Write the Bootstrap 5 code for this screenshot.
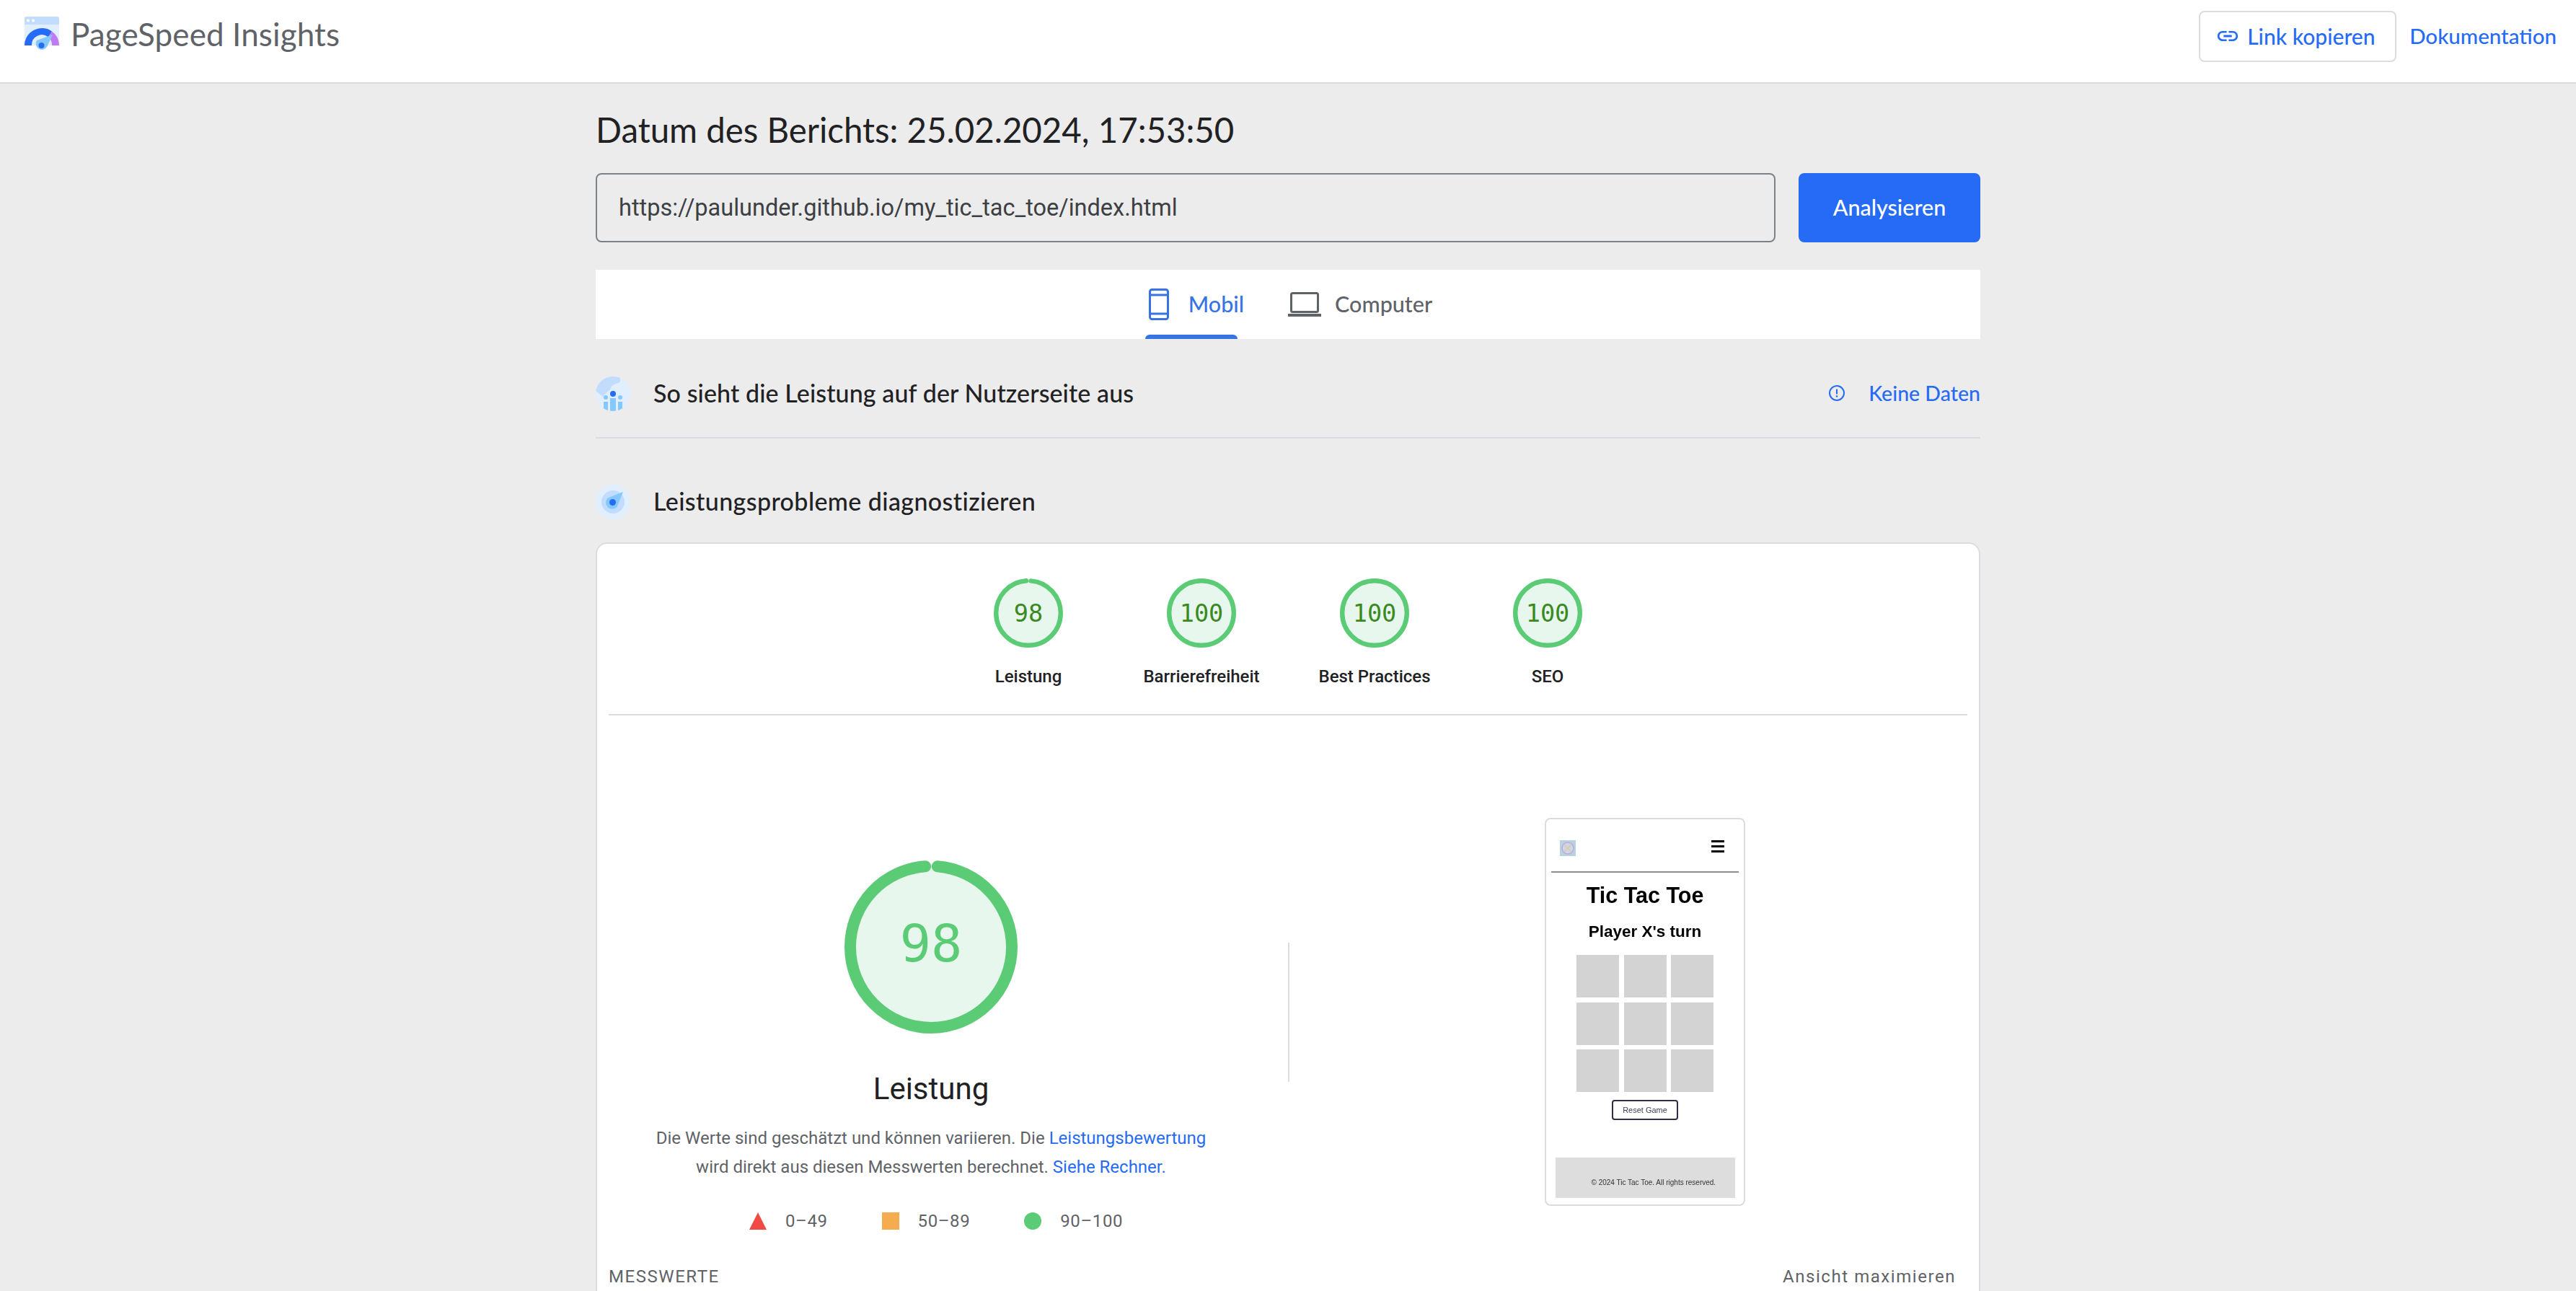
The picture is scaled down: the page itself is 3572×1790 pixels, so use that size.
<!DOCTYPE html>
<html lang="de">
<head>
    <meta charset="UTF-8">
    <meta name="viewport" content="width=device-width, initial-scale=1.0">
    <title>PageSpeed Insights</title>
    <link href="https://cdn.jsdelivr.net/npm/bootstrap@5.3.0/dist/css/bootstrap.min.css" rel="stylesheet">
    <style>
        html, body { height: 100%; overflow: hidden; }
        body { background: #ececec; font-family: Roboto, "Liberation Sans", sans-serif; color: #212124; }
        a { text-decoration: none; }
        .gsans { font-family: Lato, "Open Sans", sans-serif; }

        .psi-top { height: 116px; background: #fff; border-bottom: 2px solid #dadce0; padding: 0 27px 0 34px; }
        .psi-logo { width: 48px; height: 48px; margin-top: -20px; }
        .psi-brand { font-size: 44px; line-height: 48px; letter-spacing: .1px; color: #5f6368; margin: -20px 0 0 16px; }
        .psi-copy { width: 274px; height: 71px; margin-top: -14px; border: 2px solid #dadce0; border-radius: 8px; color: #266bf6; font-size: 30px; font-weight: 500; gap: 10px; background: #fff; padding: 0 0 0 21px; }
        .psi-copy:hover { color: #266bf6; border-color: #dadce0; }
        .psi-docs { color: #266bf6; font-size: 29.500px; font-weight: 500; margin: -14px 0 0 18px; }

        .psi-main { width: 1920px; }
        .psi-date { font-size: 47.400px; line-height: 64px; font-weight: 400; margin: 32px 0 28px; color: #212124; }
        .psi-url { height: 96px; flex: 1; border: 2px solid #7f8285; border-radius: 8px; background: #ececec; font-size: 32.500px; padding: 0 30px; color: #3c4043; box-shadow: none; }
        .psi-url:focus { background: #ececec; border-color: #7f8285; box-shadow: none; }
        .psi-go { width: 252px; height: 96px; background: #266bf6; border: 0; border-radius: 8px; color: #fff; font-size: 30.500px; font-weight: 500; }
        .psi-tabs { height: 96px; margin-top: 38px; padding-left: 7px; background: #fff; gap: 61px; }
        .psi-tab { position: relative; height: 100%; gap: 27px; font-size: 30.500px; font-weight: 500; color: #5f6368; }
        .psi-tab-computer { gap: 19px; }
        .psi-tab.is-on { color: #3574e2; }
        .psi-tab.is-on::after { content: ""; position: absolute; left: -5px; bottom: 0; width: 128px; height: 6px; background: #3574e2; border-radius: 6px 6px 0 0; }
        .psi-sec { padding: 52px 0 36px; border-bottom: 2px solid #dadce0; }
        .psi-sec-b { padding: 64px 0 32px; }
        .psi-sec-ico { width: 48px; height: 48px; margin-right: 32px; flex: none; }
        .psi-sec-title { font-size: 34px; line-height: 48px; letter-spacing: .1px; font-weight: 500; color: #212124; margin: -2px 0 0; }
        .psi-sec-b .psi-sec-title { letter-spacing: .4px; }
        .psi-none { color: #266bf6; font-size: 28.500px; font-weight: 500; gap: 32px; margin-top: -2px; }

        .psi-panel { height: 1200px; background: #fff; border: 2px solid #dadce0; border-bottom: 0; border-radius: 16px 16px 0 0; padding: 48px 16px 0; box-sizing: border-box; }
        .psi-gauges { border-bottom: 2px solid #dcdcdc; padding-bottom: 36px; }
        .psi-g { width: 240px; }
        .psi-g svg { width: 96px; height: 96px; display: block; }
        .psi-g-label { font-size: 24px; line-height: 32px; font-weight: 500; color: #212124; margin-top: 24px; }
        .psi-num { font-family: "DejaVu Sans Mono", monospace; }
        .psi-left { width: 894px; padding-top: 201px; }
        .psi-big { width: 240px; height: 240px; display: block; }
        .psi-big-label { font-size: 42px; line-height: 56px; margin-top: 49px; color: #212124; }
        .psi-desc { font-size: 24px; line-height: 40px; color: #5f6368; margin: 20px 0 0; text-align: center; }
        .psi-desc a { color: #266bf6; }
        .psi-legend { gap: 75px; margin-top: 43px; padding-left: 14px; font-size: 24px; line-height: 24px; letter-spacing: .6px; color: #5f6368; }
        .psi-legend > div { gap: 26px; }
        .psi-sq { width: 24px; height: 24px; background: #f4ac4f; }
        .psi-dot { width: 24px; height: 24px; background: #5ccb75; border-radius: 50%; }
        .psi-divider { width: 2px; height: 193px; background: #dcdcdc; margin: 315px 0 0 48px; flex: none; }
        .psi-right { flex: 1; padding: 142px 0 0 46px; }
        .psi-metrics { margin-top: 49px; font-size: 24px; line-height: 32px; color: #5f6368; letter-spacing: 1.550px; padding-right: 16px; }

        .shot { width: 278px; height: 538px; border: 2px solid #dcdcdc; border-radius: 8px; font-family: "Liberation Sans", Arial, sans-serif; color: #000; background: #fff; filter: blur(.35px); }
        .shot-nav { margin: 0 7px; height: 74px; padding: 29px 20px 21px 12px; border-bottom: 2px solid #8e8e8e; }
        .shot-logo { width: 22px; height: 22px; }
        .shot-burger { width: 18px; height: 17px; }
        .shot-h1 { font-size: 30.500px; line-height: 38px; font-weight: 700; margin: 12px 0 0; }
        .shot-h2 { font-size: 22.500px; line-height: 30px; font-weight: 700; margin: 17px 0 0; }
        .shot-grid { display: grid; grid-template-columns: repeat(3, 59px); grid-auto-rows: 59px; gap: 6.500px; margin-top: 17px; }
        .shot-grid div { background: #d3d3d3; }
        .shot-btn { width: 92px; height: 28px; margin-top: 11px; border: 2px solid #2a2f45; border-radius: 4px; font-size: 11px; line-height: 24px; text-align: center; color: #3d4156; }
        .shot-foot { width: 249px; height: 56px; margin-top: 52px; background: #dddddd; font-size: 10px; line-height: 14px; padding: 28px 0 0 50px; white-space: nowrap; color: #333; }
    </style>
</head>
<body>

<nav class="psi-top d-flex align-items-center justify-content-between">
    <a href="#" class="d-flex align-items-center">
        <svg class="psi-logo" viewBox="0 0 48 48">
            <path d="M0 40V10h48v30z" fill="#e0eefe"/>
            <path d="M3 0h42a3 3 0 0 1 3 3v8H0V3a3 3 0 0 1 3-3z" fill="#c2dcfd"/>
            <circle cx="5" cy="5.500" r="2" fill="#fff"/><circle cx="12" cy="5.500" r="2" fill="#fff"/>
            <path d="M0 40a24 24 0 0 1 38-19.500l-5 8A14 14 0 0 0 10 40z" fill="#266bf6"/>
            <path d="M38 20.500A24 24 0 0 1 48 40H38a14 14 0 0 0-5-11.500z" fill="#c07af5"/>
            <path d="M17 33 39 25 31 42a8 8 0 1 1-14-9z" fill="#85c8fd"/>
            <circle cx="23.500" cy="40" r="4" fill="#266bf6"/>
        </svg>
        <span class="psi-brand gsans">PageSpeed Insights</span>
    </a>
    <div class="d-flex align-items-center">
        <button type="button" class="btn psi-copy gsans d-flex align-items-center justify-content-start">
            <svg width="34" height="34" viewBox="0 0 24 24" fill="#266bf6"><path d="M3.900 12c0-1.710 1.390-3.100 3.100-3.100h4V7H7c-2.760 0-5 2.240-5 5s2.240 5 5 5h4v-1.900H7c-1.710 0-3.100-1.390-3.100-3.100zM8 13h8v-2H8v2zm9-6h-4v1.900h4c1.710 0 3.100 1.390 3.100 3.100s-1.390 3.100-3.100 3.100h-4V17h4c2.760 0 5-2.240 5-5s-2.240-5-5-5z"/></svg>
            Link kopieren
        </button>
        <a href="#" class="psi-docs gsans">Dokumentation</a>
    </div>
</nav>

<main class="psi-main mx-auto">
    <h1 class="psi-date gsans">Datum des Berichts: 25.02.2024, 17:53:50</h1>
    <form class="d-flex gap-4 psi-form" onsubmit="return false">
        <input type="text" class="form-control psi-url" value="https://paulunder.github.io/my_tic_tac_toe/index.html">
        <button type="submit" class="btn psi-go gsans ms-2">Analysieren</button>
    </form>

    <div class="psi-tabs d-flex justify-content-center">
        <div class="psi-tab is-on gsans d-flex align-items-center">
            <svg width="28" height="44" viewBox="0 0 28 44"><rect x="1.500" y="1.500" width="25" height="41" rx="3" fill="none" stroke="#3574e2" stroke-width="3"/><path d="M2 9h24M2 35h24" stroke="#3574e2" stroke-width="3"/></svg>
            <span>Mobil</span>
        </div>
        <div class="psi-tab psi-tab-computer gsans d-flex align-items-center">
            <svg width="46" height="34" viewBox="0 0 46 34"><rect x="4.500" y="1.500" width="37" height="26" rx="2" fill="none" stroke="#5f6368" stroke-width="3"/><rect x="0" y="30" width="46" height="4" fill="#5f6368"/></svg>
            <span>Computer</span>
        </div>
    </div>

    <div class="psi-sec d-flex align-items-center">
        <svg class="psi-sec-ico" viewBox="0 0 48 48">
            <defs><clipPath id="crux"><circle cx="24" cy="24" r="24"/></clipPath></defs>
            <circle cx="24" cy="24" r="24" fill="#e0eefe"/>
            <path d="M0 0h34v6c0 4-6 3-10 6-3 2-3 6-6 8-3 2-6 5-8 8L0 20z" fill="#c2dcfd" clip-path="url(#crux)"/>
            <g clip-path="url(#crux)" fill="#85c8fd">
                <circle cx="14" cy="29" r="3"/><circle cx="34" cy="29" r="3"/>
                <rect x="11" y="35" width="6" height="13"/><rect x="20" y="30" width="8" height="18"/><rect x="31" y="35" width="6" height="13"/>
            </g>
            <circle cx="24" cy="24" r="4" fill="#266bf6"/>
        </svg>
        <h2 class="psi-sec-title gsans flex-grow-1">So sieht die Leistung auf der Nutzerseite aus</h2>
        <div class="psi-none gsans d-flex align-items-center">
            <svg width="24" height="24" viewBox="0 0 24 24"><circle cx="12" cy="12" r="10" fill="none" stroke="#266bf6" stroke-width="2"/><path d="M12 6.500v7" stroke="#266bf6" stroke-width="2"/><circle cx="12" cy="16.500" r="1.300" fill="#266bf6"/></svg>
            <span>Keine Daten</span>
        </div>
    </div>

    <div class="psi-sec-b d-flex align-items-center">
        <svg class="psi-sec-ico" viewBox="0 0 48 48">
            <circle cx="24" cy="24" r="24" fill="#e0eefe"/>
            <circle cx="24" cy="24" r="16" fill="#c2dcfd"/>
            <path d="M16.500 18.500 38 10 29.500 31a8 8 0 1 1-13-12.500z" fill="#85c8fd"/>
            <circle cx="23.500" cy="24.500" r="4.500" fill="#266bf6"/>
        </svg>
        <h2 class="psi-sec-title gsans">Leistungsprobleme diagnostizieren</h2>
    </div>

    <section class="psi-panel">
        <div class="psi-gauges d-flex justify-content-center">
            <div class="psi-g d-flex flex-column align-items-center">
                <svg viewBox="0 0 120 120">
                    <circle cx="60" cy="60" r="56" fill="#e7f7ee"/>
                    <circle cx="60" cy="60" r="56" fill="none" stroke="#5ccb75" stroke-width="8" stroke-linecap="round" stroke-dasharray="343 9" stroke-dashoffset="-4.500" transform="rotate(-90 60 60)"/>
                    <text x="60" y="75" text-anchor="middle" class="psi-num" font-size="42" fill="#3b8a1f">98</text>
                </svg>
                <div class="psi-g-label">Leistung</div>
            </div>
            <div class="psi-g d-flex flex-column align-items-center">
                <svg viewBox="0 0 120 120">
                    <circle cx="60" cy="60" r="56" fill="#e7f7ee" stroke="#5ccb75" stroke-width="8"/>
                    <text x="60" y="75" text-anchor="middle" class="psi-num" font-size="42" fill="#3b8a1f">100</text>
                </svg>
                <div class="psi-g-label">Barrierefreiheit</div>
            </div>
            <div class="psi-g d-flex flex-column align-items-center">
                <svg viewBox="0 0 120 120">
                    <circle cx="60" cy="60" r="56" fill="#e7f7ee" stroke="#5ccb75" stroke-width="8"/>
                    <text x="60" y="75" text-anchor="middle" class="psi-num" font-size="42" fill="#3b8a1f">100</text>
                </svg>
                <div class="psi-g-label">Best Practices</div>
            </div>
            <div class="psi-g d-flex flex-column align-items-center">
                <svg viewBox="0 0 120 120">
                    <circle cx="60" cy="60" r="56" fill="#e7f7ee" stroke="#5ccb75" stroke-width="8"/>
                    <text x="60" y="75" text-anchor="middle" class="psi-num" font-size="42" fill="#3b8a1f">100</text>
                </svg>
                <div class="psi-g-label">SEO</div>
            </div>
        </div>

        <div class="d-flex">
            <div class="psi-left d-flex flex-column align-items-center">
                <svg class="psi-big" viewBox="0 0 120 120">
                    <circle cx="60" cy="60" r="56" fill="#e7f7ee"/>
                    <circle cx="60" cy="60" r="56" fill="none" stroke="#5ccb75" stroke-width="8" stroke-linecap="round" stroke-dasharray="343 9" stroke-dashoffset="-4.500" transform="rotate(-90 60 60)"/>
                    <text x="60" y="70" text-anchor="middle" class="psi-num" font-size="36" fill="#5ccb75">98</text>
                </svg>
                <div class="psi-big-label">Leistung</div>
                <p class="psi-desc">Die Werte sind geschätzt und können variieren. Die <a href="#">Leistungsbewertung</a><br>wird direkt aus diesen Messwerten berechnet. <a href="#">Siehe Rechner.</a></p>
                <div class="psi-legend d-flex">
                    <div class="d-flex align-items-center"><svg width="24" height="24" viewBox="0 0 24 24"><path d="M12 0 24 24H0z" fill="#ef4a43"/></svg><span>0–49</span></div>
                    <div class="d-flex align-items-center"><span class="psi-sq"></span><span>50–89</span></div>
                    <div class="d-flex align-items-center"><span class="psi-dot"></span><span>90–100</span></div>
                </div>
            </div>
            <div class="psi-divider"></div>
            <div class="psi-right">
                <div class="shot mx-auto d-flex flex-column align-items-center">
                    <div class="shot-nav d-flex justify-content-between align-items-start align-self-stretch">
                        <svg class="shot-logo" viewBox="0 0 22 22"><rect width="22" height="22" fill="#b8d2e0"/><circle cx="11" cy="11" r="8" fill="#cfd6ea" stroke="#c0a8e0" stroke-width="1.500"/><path d="M6 6l10 10M16 6L6 16" stroke="#d6cf9a" stroke-width="1.500"/></svg>
                        <svg class="shot-burger" viewBox="0 0 18 17"><path d="M0 1.500h18M0 8.500h18M0 15.500h18" stroke="#000" stroke-width="3"/></svg>
                    </div>
                    <div class="shot-h1">Tic Tac Toe</div>
                    <div class="shot-h2">Player X's turn</div>
                    <div class="shot-grid">
                        <div></div><div></div><div></div>
                        <div></div><div></div><div></div>
                        <div></div><div></div><div></div>
                    </div>
                    <div class="shot-btn">Reset Game</div>
                    <div class="shot-foot">© 2024 Tic Tac Toe. All rights reserved.</div>
                </div>
            </div>
        </div>

        <div class="psi-metrics d-flex justify-content-between">
            <span>MESSWERTE</span>
            <span>Ansicht maximieren</span>
        </div>
    </section>
</main>

<script src="https://cdn.jsdelivr.net/npm/bootstrap@5.3.0/dist/js/bootstrap.bundle.min.js"></script>
</body>
</html>
